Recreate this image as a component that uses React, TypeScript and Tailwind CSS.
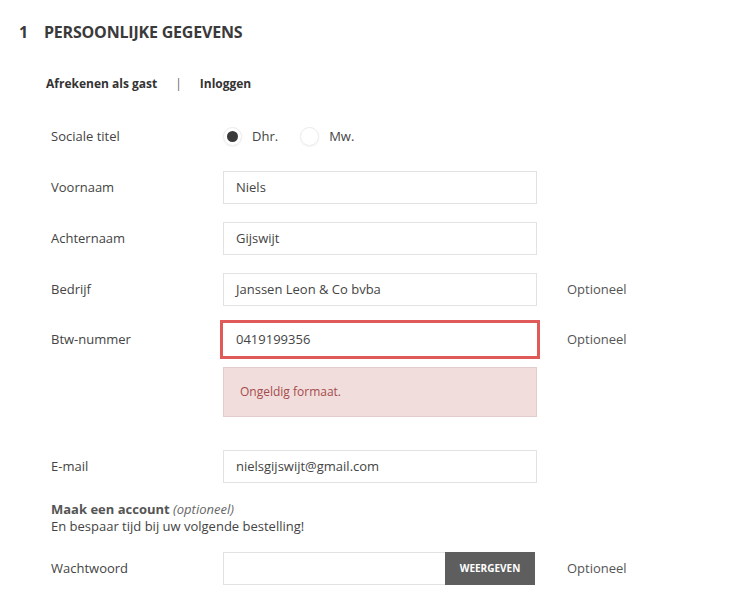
import React from 'react';

const font = { fontFamily: '"Open Sans", "Liberation Sans", sans-serif' };

function Field({
  label,
  value,
  optional,
}: {
  label: string;
  value: string;
  optional?: boolean;
}) {
  return (
    <div className="flex items-center h-[33px]">
      <div className="w-[172px] text-[13px] text-[#444]">{label}</div>
      <div className="w-[314px] h-[33px] border border-[#e2e2e2] bg-white flex items-center pl-[12px] text-[13px] text-[#444]">
        {value}
      </div>
      {optional && <div className="ml-[30px] text-[13px] text-[#555]">Optioneel</div>}
    </div>
  );
}

export default function App() {
  return (
    <div className="w-[744px] h-[603px] bg-white text-[#444] overflow-hidden" style={font}>
      {/* Section heading */}
      <div className="pt-[22px] pl-[19px] flex items-center h-[42px] leading-[20px]">
        <span className="text-[16px] font-bold text-[#3a3a3a] w-[25px]">1</span>
        <span className="text-[16px] font-bold text-[#3a3a3a] tracking-[-0.2px]">PERSOONLIJKE GEGEVENS</span>
      </div>

      {/* Guest / login */}
      <div className="mt-[32px] pl-[46px] flex items-center h-[20px] text-[12px] font-bold text-[#333]">
        <span>Afrekenen als gast</span>
        <span className="mx-[18px] font-normal text-[#666]">|</span>
        <span>Inloggen</span>
      </div>

      <div className="pl-[51px]">
        {/* Social title */}
        <div className="mt-[26px] flex items-center h-[33px]">
          <div className="w-[172px] text-[13px] text-[#444]">Sociale titel</div>
          <div className="flex items-center text-[13px] text-[#444]">
            <span className="w-[19px] h-[19px] rounded-full border border-[#ececec] shadow-[0_1px_2px_rgba(0,0,0,0.06)] flex items-center justify-center">
              <span className="w-[11px] h-[11px] rounded-full bg-[#3a3a3a]" />
            </span>
            <span className="ml-[10px]">Dhr.</span>
            <span className="ml-[22px] w-[19px] h-[19px] rounded-full border border-[#ececec] shadow-[0_1px_2px_rgba(0,0,0,0.06)]" />
            <span className="ml-[10px]">Mw.</span>
          </div>
        </div>

        <div className="mt-[18px] flex flex-col gap-[18px]">
          <Field label="Voornaam" value="Niels" />
          <Field label="Achternaam" value="Gijswijt" />
          <Field label="Bedrijf" value="Janssen Leon & Co bvba" optional />
        </div>

        {/* VAT number with error */}
        <div className="mt-[14px] flex items-center h-[39px]">
          <div className="w-[169px] text-[13px] text-[#444]">Btw-nummer</div>
          <div className="w-[320px] h-[39px] border-[3px] border-[#e05a5a] bg-white flex items-center pl-[13px] text-[13px] text-[#444]">
            0419199356
          </div>
          <div className="ml-[27px] text-[13px] text-[#555]">Optioneel</div>
        </div>
        <div className="mt-[8px] ml-[172px] w-[314px] h-[50px] bg-[#f2dddd] border border-[#e5cccc] flex items-center pl-[16px] text-[12px] text-[#a24c4c]">
          Ongeldig formaat.
        </div>

        <div className="mt-[33px]">
          <Field label="E-mail" value="nielsgijswijt@gmail.com" />
        </div>

        {/* Account */}
        <div className="mt-[18px] text-[13px] leading-[17px]">
          <div>
            <span className="font-bold text-[#555]">Maak een account</span>{' '}
            <span className="italic text-[#666]">(optioneel)</span>
          </div>
          <div className="text-[13px] text-[#444]">En bespaar tijd bij uw volgende bestelling!</div>
        </div>

        <div className="mt-[17px] flex items-center h-[33px]">
          <div className="w-[172px] text-[13px] text-[#444]">Wachtwoord</div>
          <div className="flex w-[312px] h-[33px]">
            <div className="flex-1 border border-[#e2e2e2] border-r-0 bg-white" />
            <button className="w-[90px] h-[33px] bg-[#5e5e5e] text-white text-[10px] font-bold uppercase">
              Weergeven
            </button>
          </div>
          <div className="ml-[32px] text-[13px] text-[#555]">Optioneel</div>
        </div>
      </div>
    </div>
  );
}
